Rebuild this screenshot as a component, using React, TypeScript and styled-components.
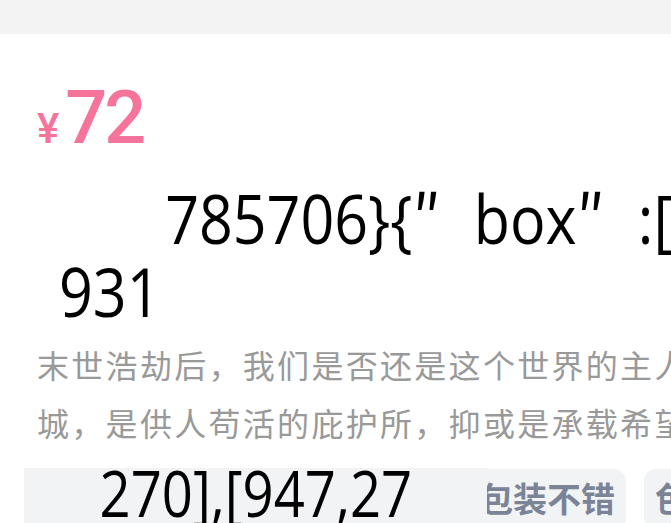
import React from "react";
import styled, { createGlobalStyle } from "styled-components";

const Global = createGlobalStyle`
  html, body { margin: 0; padding: 0; background: #ffffff; }
  body { font-family: "Noto Sans CJK SC", "Noto Sans", sans-serif; overflow: hidden; }
`;

const Page = styled.div`
  width: 671px;
  height: 523px;
  overflow: hidden;
  background: #ffffff;
`;

const TopBar = styled.div`
  height: 34px;
  background: #f3f3f3;
`;

const Card = styled.div`
  padding: 47px 0 0 37px;
  background: #ffffff;
`;

const PriceRow = styled.div`
  display: flex;
  align-items: baseline;
  color: #f6749a;
  font-family: Roboto, "Liberation Sans", sans-serif;
  font-weight: 500;
  line-height: 73px;
  height: 73px;
`;

const Currency = styled.span`
  font-size: 42px;
  margin-right: 6px;
`;

const Amount = styled.span`
  font-size: 74px;
  letter-spacing: -3px;
`;

const Title = styled.div`
  margin-top: 24px;
  padding-left: 22px;
  font-family: "Open Sans", "Noto Sans", sans-serif;
  font-size: 68px;
  line-height: 73px;
  color: #000000;
  white-space: nowrap;
`;

const TitleLine = styled.div<{ $indent?: number }>`
  padding-left: ${(p) => p.$indent ?? 0}px;
  transform: scaleX(0.87);
  transform-origin: left center;
`;

const Quote = styled.span`
  font-family: "Noto Sans CJK SC", sans-serif;
  margin-right: 23px;
`;

const Description = styled.div`
  margin-top: 8px;
  font-size: 32px;
  line-height: 58px;
  color: #999999;
  letter-spacing: 2.3px;
  white-space: nowrap;
`;

const Tags = styled.div`
  position: relative;
  margin-top: 18px;
  display: flex;
  gap: 18px;
  padding-left: 431px;
  white-space: nowrap;
`;

const Tag = styled.div`
  flex: none;
  height: 62px;
  padding: 0 11px;
  border-radius: 12px;
  background: #f2f3f5;
  color: #7b8497;
  font-size: 34px;
  font-weight: 700;
  line-height: 58px;
`;

const Overlay = styled.div`
  position: absolute;
  left: -13px;
  top: -1px;
  width: 463px;
  height: 62px;
  display: flex;
  justify-content: center;
  background: #f2f3f5;
  color: #000000;
  font-family: "Open Sans", "Noto Sans", sans-serif;
  font-size: 64px;
  line-height: 50px;
`;

const OverlayText = styled.span`
  display: inline-block;
  transform: scaleX(0.85);
  transform-origin: center;
`;

export default function App() {
  return (
    <Page>
      <Global />
      <TopBar />
      <Card>
        <PriceRow>
          <Currency>¥</Currency>
          <Amount>72</Amount>
        </PriceRow>
        <Title>
          <TitleLine $indent={122}>
            {"785706}{"}
            <Quote>{"\u2033 "}</Quote>
            {"box"}
            <Quote>{"\u2033 "}</Quote>
            {":["}
          </TitleLine>
          <TitleLine>931</TitleLine>
        </Title>
        <Description>
          <div>末世浩劫后，我们是否还是这个世界的主人？</div>
          <div>城，是供人苟活的庇护所，抑或是承载希望</div>
        </Description>
        <Tags>
          <Tag>包装不错</Tag>
          <Tag>色彩好看</Tag>
          <Overlay>
            <OverlayText>270],[947,27</OverlayText>
          </Overlay>
        </Tags>
      </Card>
    </Page>
  );
}
